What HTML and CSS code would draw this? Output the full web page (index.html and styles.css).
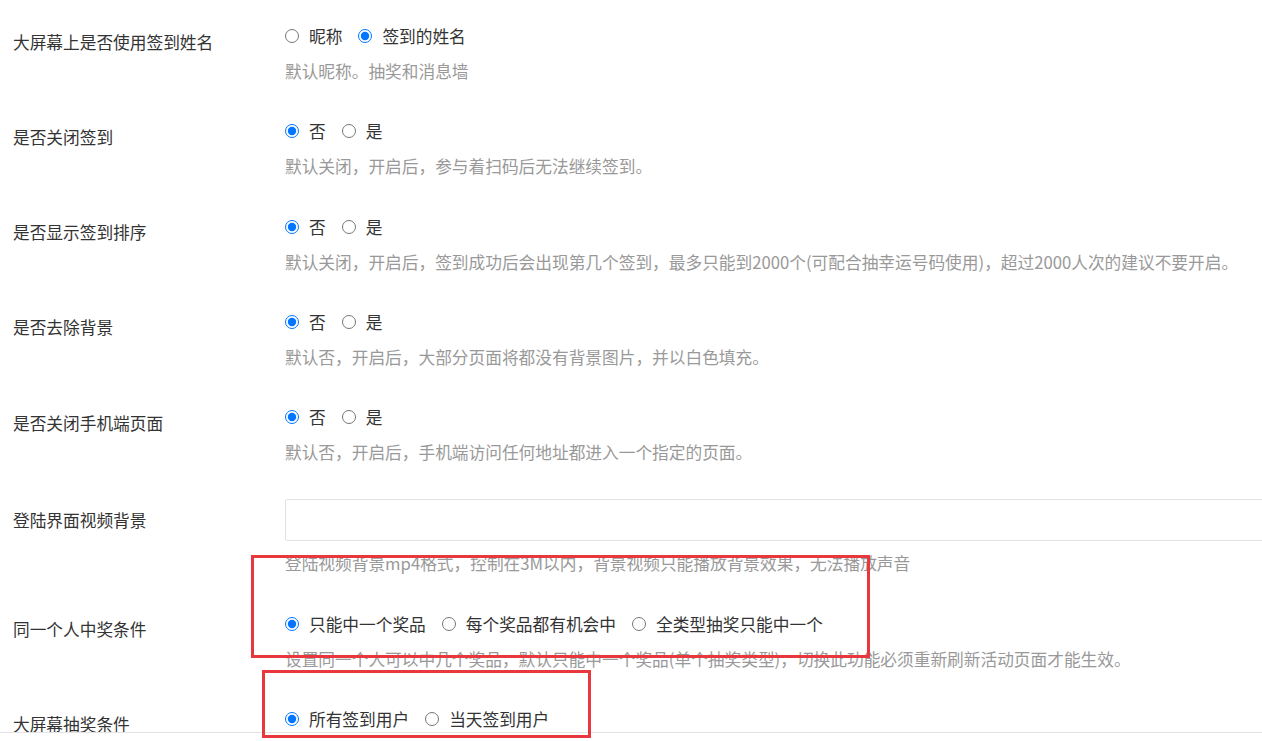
FILE: index.html
```html
<!DOCTYPE html>
<html lang="zh-CN">
<head>
  <meta charset="UTF-8">
  <title>活动设置</title>
  <link rel="stylesheet" href="styles.css">
</head>
<body>
  <form class="settings">

    <div class="form-row">
      <label class="form-label">大屏幕上是否使用签到姓名</label>
      <div class="form-field">
        <div class="radio-group">
          <label class="radio"><input type="radio" name="nameType">昵称</label>
          <label class="radio"><input type="radio" name="nameType" checked>签到的姓名</label>
        </div>
        <p class="help">默认昵称。抽奖和消息墙</p>
      </div>
    </div>

    <div class="form-row">
      <label class="form-label">是否关闭签到</label>
      <div class="form-field">
        <div class="radio-group">
          <label class="radio"><input type="radio" name="closeSign" checked>否</label>
          <label class="radio"><input type="radio" name="closeSign">是</label>
        </div>
        <p class="help">默认关闭，开启后，参与着扫码后无法继续签到。</p>
      </div>
    </div>

    <div class="form-row">
      <label class="form-label">是否显示签到排序</label>
      <div class="form-field">
        <div class="radio-group">
          <label class="radio"><input type="radio" name="showOrder" checked>否</label>
          <label class="radio"><input type="radio" name="showOrder">是</label>
        </div>
        <p class="help">默认关闭，开启后，签到成功后会出现第几个签到，最多只能到2000个(可配合抽幸运号码使用)，超过2000人次的建议不要开启。</p>
      </div>
    </div>

    <div class="form-row">
      <label class="form-label">是否去除背景</label>
      <div class="form-field">
        <div class="radio-group">
          <label class="radio"><input type="radio" name="noBg" checked>否</label>
          <label class="radio"><input type="radio" name="noBg">是</label>
        </div>
        <p class="help">默认否，开启后，大部分页面将都没有背景图片，并以白色填充。</p>
      </div>
    </div>

    <div class="form-row">
      <label class="form-label">是否关闭手机端页面</label>
      <div class="form-field">
        <div class="radio-group">
          <label class="radio"><input type="radio" name="closeMobile" checked>否</label>
          <label class="radio"><input type="radio" name="closeMobile">是</label>
        </div>
        <p class="help">默认否，开启后，手机端访问任何地址都进入一个指定的页面。</p>
      </div>
    </div>

    <div class="form-row form-row-input">
      <label class="form-label">登陆界面视频背景</label>
      <div class="form-field field-clip">
        <input type="text" class="text-input">
        <p class="help">登陆视频背景mp4格式，控制在3M以内，背景视频只能播放背景效果，无法播放声音</p>
      </div>
    </div>

    <div class="form-row">
      <label class="form-label">同一个人中奖条件</label>
      <div class="form-field">
        <div class="radio-group">
          <label class="radio"><input type="radio" name="winRule" checked>只能中一个奖品</label>
          <label class="radio"><input type="radio" name="winRule">每个奖品都有机会中</label>
          <label class="radio"><input type="radio" name="winRule">全类型抽奖只能中一个</label>
        </div>
        <p class="help">设置同一个人可以中几个奖品，默认只能中一个奖品(单个抽奖类型)，切换此功能必须重新刷新活动页面才能生效。</p>
      </div>
    </div>

    <div class="form-row">
      <label class="form-label">大屏幕抽奖条件</label>
      <div class="form-field">
        <div class="radio-group">
          <label class="radio"><input type="radio" name="drawUsers" checked>所有签到用户</label>
          <label class="radio"><input type="radio" name="drawUsers">当天签到用户</label>
        </div>
      </div>
    </div>

  </form>

  <!-- 标注框 -->
  <div class="mark mark-win"></div>
  <div class="mark mark-draw"></div>

  <div class="bottom-bar"></div>
</body>
</html>
```

FILE: styles.css
```css
html, body {
  margin: 0;
  padding: 0;
  height: 100%;
  background: #fff;
  overflow: hidden;
}

body {
  font-family: "Noto Sans CJK SC", "Noto Sans", sans-serif;
  font-size: 16.7px;
  color: #333;
}

.settings {
  box-sizing: border-box;
  height: 741px;
  overflow: hidden;
  padding: 21px 0 0 13px;
}

.form-row {
  display: flex;
  margin-bottom: 30.25px;
}

.form-label {
  width: 272px;
  flex-shrink: 0;
  line-height: 30px;
  padding-top: 5.5px;
  color: #333;
}

.form-field {
  flex: 1;
  min-width: 0;
}

.radio-group {
  display: flex;
  height: 30px;
  align-items: center;
}

.radio {
  display: inline-flex;
  align-items: center;
  margin-right: 16px;
  line-height: 30px;
  cursor: pointer;
}

.radio input {
  width: 14px;
  height: 14px;
  margin: 0 10px 0 0;
}

.help {
  margin: 5px 0 0;
  line-height: 30px;
  color: #999;
  white-space: nowrap;
}

/* 视频背景输入行，输入框右侧延伸出可视区 */
.form-row-input .form-label {
  padding-top: 8px;
}

.field-clip {
  overflow: hidden;
}

.text-input {
  display: block;
  box-sizing: border-box;
  width: calc(100% + 10px);
  height: 42px;
  margin-top: 2px;
  border: 1px solid #e2e2e2;
  border-radius: 2px;
  outline: none;
}

.form-row-input .help {
  margin-top: 7px;
}

.bottom-bar {
  position: fixed;
  z-index: 1;
  left: 0;
  right: 0;
  top: 732px;
  bottom: 0;
  background: #fff;
  border-top: 1px solid #e3e3e3;
}

.mark {
  position: absolute;
  z-index: 2;
  box-sizing: border-box;
  border: 3px solid #e8383d;
}

.mark-win {
  left: 251px;
  top: 555px;
  width: 619px;
  height: 103px;
}

.mark-draw {
  left: 262px;
  top: 670px;
  width: 329px;
  height: 68px;
}
```
